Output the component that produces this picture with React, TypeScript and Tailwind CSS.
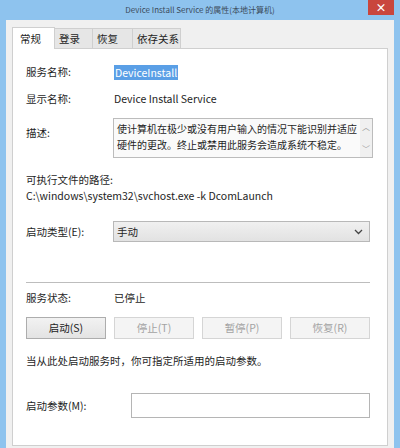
import React from 'react';

const cjk = { fontFamily: '"Noto Sans CJK SC", "Noto Sans", sans-serif' };

function Row({ label, children, className = '' }: { label: string; children?: React.ReactNode; className?: string }) {
  return (
    <div className={`flex items-center ${className}`}>
      <div className="w-[88px] shrink-0">{label}</div>
      {children}
    </div>
  );
}

function Btn({ children, disabled }: { children: React.ReactNode; disabled?: boolean }) {
  return (
    <div
      className={
        disabled
          ? 'w-[80px] h-[22px] flex items-center justify-center border border-[#d5d5d5] bg-[#f4f4f4] text-[#a3a3a3]'
          : 'w-[80px] h-[22px] flex items-center justify-center border border-[#adadad] bg-gradient-to-b from-[#f2f2f2] to-[#e3e3e3] text-[#222]'
      }
    >
      {children}
    </div>
  );
}

export default function App() {
  const tabs = [
    { t: '登录', w: 'w-[38px]' },
    { t: '恢复', w: 'w-[40px]' },
    { t: '依存关系', w: 'w-[48px]' },
  ];
  return (
    <div className="w-[400px] h-[448px] bg-[#8ec3ee] flex flex-col overflow-hidden text-[10.5px] text-[#1e1e1e]" style={cjk}>
      {/* title bar */}
      <div className="relative h-[20px] shrink-0 flex items-center justify-center">
        <span className="text-[8px] text-[#3b4a5a]">Device Install Service 的属性(本地计算机)</span>
        <div className="absolute right-[6px] top-0 w-[26px] h-[15px] bg-[#c9463d] flex items-center justify-center text-white text-[11px] font-bold leading-none">
          ×
        </div>
      </div>

      {/* client */}
      <div className="flex-1 mx-[6px] bg-[#f0f0f0] px-[6px] pt-[7px] flex flex-col">
        <div className="flex items-end h-[21px]">
          <div className="h-[22px] w-[43px] bg-white border border-b-0 border-[#cfcfcf] flex items-center pl-[7px] relative z-10 -mb-px text-[10.5px]">
            常规
          </div>
          {tabs.map(({ t, w }) => (
            <div
              key={t}
              className={`h-[20px] ${w} pl-[4px] bg-[#e6e6e6] border border-b-0 border-l-0 border-[#cfcfcf] flex items-center whitespace-nowrap text-[10.5px]`}
            >
              {t}
            </div>
          ))}
        </div>
        <div className="flex-1 bg-white border border-[#cfcfcf] pl-[13px] pr-[17px] pt-[15px] mb-[2px]">
          <Row label="服务名称:" className="h-[16px]">
            <span className="bg-[#5a9fe6] text-white px-[1px] leading-[15px]">DeviceInstall</span>
          </Row>
          <Row label="显示名称:" className="h-[16px] mt-[11px]">
            <span>Device Install Service</span>
          </Row>
          <div className="flex mt-[11px]">
            <div className="w-[87px] shrink-0 pt-[7px]">描述:</div>
            <div className="flex-1 h-[40px] border border-[#bcbcbc] bg-[#fafafa] flex">
              <div className="flex-1 px-[3px] pt-[2px] leading-[16px] text-[10px] whitespace-nowrap overflow-hidden">
                <div>使计算机在极少或没有用户输入的情况下能识别并适应</div>
                <div>硬件的更改。终止或禁用此服务会造成系统不稳定。</div>
              </div>
              <div className="w-[12px] bg-[#f0f0f0] flex flex-col justify-between items-center text-[8px] text-[#9a9a9a] py-[2px]">
                <span>︿</span>
                <span>﹀</span>
              </div>
            </div>
          </div>
          <div className="mt-[14px] h-[16px] flex items-center">可执行文件的路径:</div>
          <div className="h-[16px] flex items-center">C:\windows\system32\svchost.exe -k DcomLaunch</div>
          <div className="flex items-center mt-[17px]">
            <div className="w-[87px] shrink-0">启动类型(E):</div>
            <div className="flex-1 h-[21px] border border-[#b8b8b8] bg-gradient-to-b from-[#f0f0f0] to-[#e2e2e2] flex items-center justify-between px-[3px]">
              <span>手动</span>
              <svg width="9" height="6" viewBox="0 0 9 6" className="mr-[3px]">
                <path d="M1 1 L4.5 4.5 L8 1" stroke="#444" strokeWidth="1.3" fill="none" />
              </svg>
            </div>
          </div>
          <div className="mt-[40px] border-t border-[#bdbdbd]" />
          <Row label="服务状态:" className="h-[16px] mt-[7px]">
            <span>已停止</span>
          </Row>
          <div className="flex justify-between mt-[11px]">
            <Btn>启动(S)</Btn>
            <Btn disabled>停止(T)</Btn>
            <Btn disabled>暂停(P)</Btn>
            <Btn disabled>恢复(R)</Btn>
          </div>
          <div className="mt-[14px] h-[16px] flex items-center">当从此处启动服务时，你可指定所适用的启动参数。</div>
          <div className="flex items-center mt-[24px]">
            <div className="w-[105px] shrink-0">启动参数(M):</div>
            <div className="flex-1 h-[25px] border border-[#b5b5b5] bg-white" />
          </div>
        </div>
      </div>
    </div>
  );
}
